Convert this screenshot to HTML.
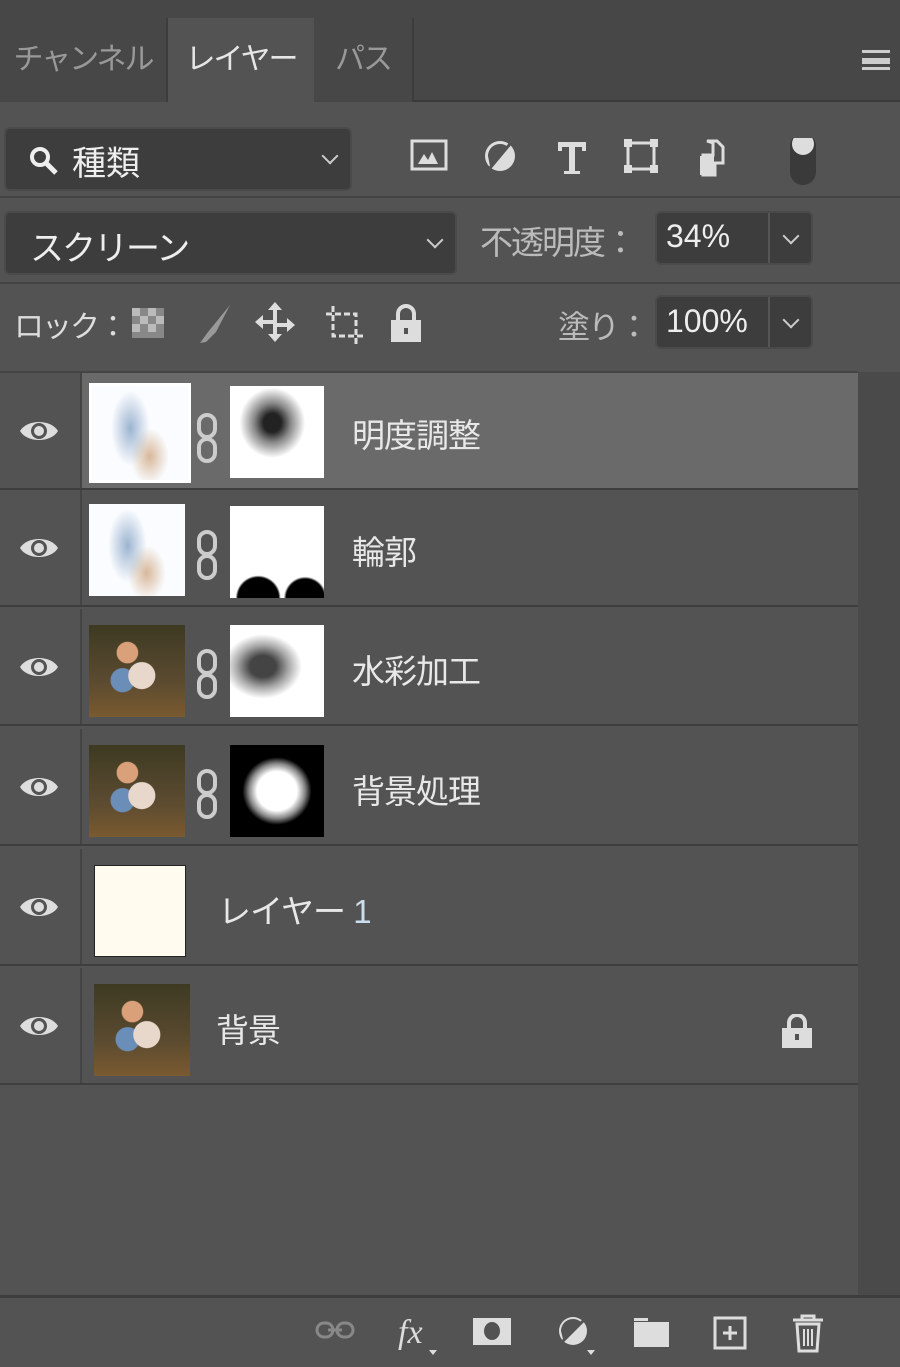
<!DOCTYPE html>
<html><head><meta charset="utf-8"><style>
*{margin:0;padding:0;box-sizing:border-box}
body{width:900px;height:1367px;background:#535353;position:relative;overflow:hidden;font-family:"Liberation Sans","Noto Sans CJK JP",sans-serif;color:#ddd}
.a{position:absolute}
.tab{position:absolute;top:18px;height:84px;font-size:30px;line-height:84px;text-align:center;color:#999;letter-spacing:-2px}
.box{position:absolute;background:#3d3d3d;border:2px solid #4a4a4a;border-radius:6px}
.row{position:absolute;left:0;width:858px;height:117px;border-bottom:2px solid #3e3e3e}
.row .eye{position:absolute;left:19px;top:50%;margin-top:-15px}
.row .sep{position:absolute;left:80px;top:0;bottom:0;width:2px;background:#444}
.name{position:absolute;font-size:33px;color:#e8e8e8;top:50%;margin-top:-22px;letter-spacing:-1px}
.th{position:absolute;top:16px;width:96px;height:92px}
.mk{position:absolute;top:16px;left:230px;width:94px;height:92px;background:#fff}
.chain{position:absolute;left:196px;top:40px}
.photo{background:radial-gradient(circle at 40% 30%,#d9a07a 0 12%,transparent 13%),radial-gradient(circle at 55% 55%,#e8d8cc 0 18%,transparent 19%),radial-gradient(circle at 35% 60%,#6a8eb8 0 14%,transparent 15%),linear-gradient(#3d3a22,#5a4a30 60%,#7a5a30)}
.sketch{background:radial-gradient(ellipse 20% 40% at 40% 45%,#9cb4d0 0,transparent 100%),radial-gradient(ellipse 20% 30% at 60% 75%,#d8b89a 0,transparent 100%),#fafcff}
.chev{position:absolute;width:12px;height:12px;border-right:2px solid #ccc;border-bottom:2px solid #ccc;transform:rotate(45deg)}
</style></head><body>
<div class="a" style="left:0;top:0;width:900px;height:18px;background:#474747"></div>
<div class="a" style="left:0;top:18px;width:900px;height:84px;background:#474747;border-bottom:2px solid #3a3a3a"></div>
<div class="tab" style="left:0;width:168px;background:#474747;border-right:2px solid #3c3c3c">チャンネル</div>
<div class="tab" style="left:168px;width:146px;background:#535353;color:#e6e6e6;height:86px">レイヤー</div>
<div class="tab" style="left:314px;width:100px;background:#474747;border-right:2px solid #3c3c3c">パス</div>
<div class="a" style="left:862px;top:50px;width:28px;height:20px;border-top:3px solid #ccc;border-bottom:3px solid #ccc"><div style="margin-top:5px;border-top:3px solid #ccc;height:3px;border-bottom:3px solid #ccc"></div></div>

<div class="box" style="left:4px;top:127px;width:348px;height:64px"></div>
<svg class="a" style="left:28px;top:145px" width="32" height="32"><circle cx="12" cy="12" r="8" fill="none" stroke="#eee" stroke-width="4"/><line x1="18" y1="18" x2="28" y2="28" stroke="#eee" stroke-width="5"/></svg>
<div class="a" style="left:72px;top:136px;font-size:34px;color:#eee">種類</div>
<div class="chev" style="left:324px;top:150px"></div>
<svg class="a" style="left:410px;top:138px" width="410" height="50" fill="#ddd">
<rect x="2" y="3" width="34" height="28" fill="none" stroke="#ddd" stroke-width="3"/><path d="M8 26l6-10 4 6 4-8 6 12z"/>
<circle cx="90" cy="18" r="15" fill="#ddd"/><path d="M80 30L100 6" stroke="#535353" stroke-width="3"/><path d="M78 18a12 12 0 0 1 20-9L80 28z" fill="#535353"/>
<path d="M148 4h28v9h-4v-4h-7v24h5v3h-16v-3h5V9h-7v4h-4z"/>
<rect x="218" y="5" width="26" height="26" fill="none" stroke="#ddd" stroke-width="3"/><rect x="214" y="1" width="8" height="8"/><rect x="240" y="1" width="8" height="8"/><rect x="214" y="27" width="8" height="8"/><rect x="240" y="27" width="8" height="8"/>
<path d="M297 3h10l6 6v16h-8v12h-12V17h10V5z" fill="none" stroke="#ddd" stroke-width="3"/><rect x="290" y="18" width="14" height="19"/>
<rect x="380" y="-5" width="26" height="52" rx="13" fill="#3a3a3a"/><circle cx="393" cy="6" r="11" fill="#ddd"/>
</svg>
<div class="a" style="left:0;top:196px;width:900px;height:2px;background:#444"></div>

<div class="box" style="left:4px;top:211px;width:453px;height:64px"></div>
<div class="a" style="left:30px;top:221px;font-size:34px;color:#eee;letter-spacing:-2px">スクリーン</div>
<div class="chev" style="left:429px;top:234px"></div>
<div class="a" style="left:480px;top:216px;font-size:33px;color:#bbb;letter-spacing:-2px">不透明度：</div>
<div class="box" style="left:655px;top:211px;width:158px;height:54px"></div>
<div class="a" style="left:768px;top:213px;width:2px;height:50px;background:#555"></div>
<div class="a" style="left:666px;top:218px;font-size:32px;color:#eee">34%</div>
<div class="chev" style="left:785px;top:230px"></div>
<div class="a" style="left:0;top:282px;width:900px;height:2px;background:#444"></div>

<div class="a" style="left:14px;top:302px;font-size:30px;color:#ddd;letter-spacing:-2px">ロック：</div>
<svg class="a" style="left:128px;top:300px" width="300" height="50">
<g fill="#888"><rect x="4" y="8" width="32" height="30"/></g><g fill="#bbb"><rect x="4" y="8" width="8" height="8"/><rect x="20" y="8" width="8" height="8"/><rect x="12" y="16" width="8" height="8"/><rect x="28" y="16" width="8" height="8"/><rect x="4" y="24" width="8" height="8"/><rect x="20" y="24" width="8" height="8"/></g>
<path d="M102 5L80 32l-8 11 6-1 10-10z" fill="#999"/>
<path d="M147 2l-7 8h5v10h-10v-5l-8 7 8 7v-5h10v10h-5l7 8 7-8h-5V27h10v5l8-7-8-7v5h-10V10h5z" fill="#ddd"/>
<path d="M205 6v30h30M198 14h30v30" fill="none" stroke="#ddd" stroke-width="3" stroke-dasharray="6 3"/>
<rect x="263" y="20" width="30" height="22" fill="#ddd"/><path d="M270 20v-6a8 8 0 0 1 16 0v6" fill="none" stroke="#ddd" stroke-width="4"/><rect x="276" y="28" width="4" height="6" fill="#535353"/>
</svg>
<div class="a" style="left:558px;top:302px;font-size:32px;color:#bbb;letter-spacing:-2px">塗り：</div>
<div class="box" style="left:655px;top:295px;width:158px;height:54px"></div>
<div class="a" style="left:768px;top:297px;width:2px;height:50px;background:#555"></div>
<div class="a" style="left:666px;top:303px;font-size:32px;color:#eee">100%</div>
<div class="chev" style="left:785px;top:314px"></div>

<div class="a" style="left:858px;top:372px;width:42px;height:923px;background:#4a4a4a"></div>
<div class="a" style="left:0;top:371px;width:858px;height:2px;background:#444"></div>

<svg width="0" height="0" style="position:absolute"><defs>
<g id="eye"><path d="M1 15C8 3 32 3 39 15C32 27 8 27 1 15z" fill="#ddd"/><circle cx="20" cy="15" r="8" fill="#535353"/><circle cx="20" cy="15" r="5" fill="#ddd"/></g>
<g id="ch"><rect x="3" y="2" width="16" height="22" rx="8" fill="none" stroke="#ccc" stroke-width="4"/><rect x="3" y="26" width="16" height="22" rx="8" fill="none" stroke="#ccc" stroke-width="4"/></g>
</defs></svg>

<div class="row" style="top:373px;background:#535353"><div class="a" style="left:82px;top:0;width:776px;height:115px;background:#6a6a6a"></div><div class="sep"></div><svg class="eye" width="40" height="30"><use href="#eye"/></svg>
<div class="th sketch" style="left:89px;top:10px;height:100px;width:102px;border:3px solid #fff"></div><svg class="chain" width="22" height="50"><use href="#ch"/></svg>
<div class="mk" style="top:13px;background:radial-gradient(ellipse at 45% 40%,#222 0 12%,#888 25%,#fff 45%)"></div>
<div class="name" style="left:352px">明度調整</div></div>

<div class="row" style="top:490px"><div class="sep"></div><svg class="eye" width="40" height="30"><use href="#eye"/></svg>
<div class="th sketch" style="left:89px;top:14px"></div><svg class="chain" width="22" height="50"><use href="#ch"/></svg>
<div class="mk" style="background:radial-gradient(circle at 30% 100%,#000 0 18%,transparent 20%),radial-gradient(circle at 80% 100%,#000 0 16%,transparent 18%),#fff"></div>
<div class="name" style="left:352px">輪郭</div></div>

<div class="row" style="top:609px"><div class="sep"></div><svg class="eye" width="40" height="30"><use href="#eye"/></svg>
<div class="th photo" style="left:89px"></div><svg class="chain" width="22" height="50"><use href="#ch"/></svg>
<div class="mk" style="background:radial-gradient(ellipse at 35% 45%,#444 0 15%,#aaa 30%,#fff 45%)"></div>
<div class="name" style="left:352px">水彩加工</div></div>

<div class="row" style="top:729px"><div class="sep"></div><svg class="eye" width="40" height="30"><use href="#eye"/></svg>
<div class="th photo" style="left:89px"></div><svg class="chain" width="22" height="50"><use href="#ch"/></svg>
<div class="mk" style="background:radial-gradient(ellipse at 50% 50%,#fff 0 30%,#888 42%,#000 52%)"></div>
<div class="name" style="left:352px">背景処理</div></div>

<div class="row" style="top:849px"><div class="sep"></div><svg class="eye" width="40" height="30"><use href="#eye"/></svg>
<div class="th" style="left:94px;width:92px;height:92px;background:#fffbee;border:1px solid #222"></div>
<div class="name" style="left:218px">レイヤー <span style="color:#cde">1</span></div></div>

<div class="row" style="top:968px"><div class="sep"></div><svg class="eye" width="40" height="30"><use href="#eye"/></svg>
<div class="th photo" style="left:94px"></div>
<div class="name" style="left:216px">背景</div>
<svg class="a" style="left:780px;top:46px" width="34" height="36"><rect x="2" y="14" width="30" height="20" fill="#ddd"/><path d="M9 14V9a8 8 0 0 1 16 0v5" fill="none" stroke="#ddd" stroke-width="4"/><rect x="15" y="20" width="4" height="6" fill="#535353"/></svg></div>

<div class="a" style="left:0;top:1295px;width:900px;height:3px;background:#3e3e3e"></div>
<svg class="a" style="left:300px;top:1305px" width="540" height="55">
<g fill="none" stroke="#888" stroke-width="3"><rect x="17" y="18" width="16" height="14" rx="7"/><rect x="37" y="18" width="16" height="14" rx="7"/><line x1="28" y1="25" x2="42" y2="25"/></g>
<text x="98" y="38" font-family="Liberation Serif" font-style="italic" font-size="34" fill="#ddd">fx</text><path d="M129 45h8l-4 5z" fill="#ddd"/>
<rect x="173" y="13" width="38" height="27" fill="#ddd"/><ellipse cx="192" cy="26" rx="8" ry="9" fill="#535353"/>
<circle cx="273" cy="26" r="14" fill="#ddd"/><path d="M262 37L285 14" stroke="#535353" stroke-width="3"/><path d="M261 26a12 12 0 0 1 20-9L263 34z" fill="#535353"/><path d="M287 45h8l-4 5z" fill="#ddd"/>
<rect x="334" y="17" width="35" height="25" fill="#ddd"/><rect x="334" y="13" width="14" height="3" fill="#ddd"/>
<rect x="415" y="13" width="30" height="30" fill="none" stroke="#ddd" stroke-width="3"/><path d="M430 21v14M423 28h14" stroke="#ddd" stroke-width="3"/>
<path d="M493 15h30M502 15v-4h12v4M497 19h22l-2 27h-18z" fill="none" stroke="#ddd" stroke-width="3"/><path d="M504 24v17M508 24v17M512 24v17" stroke="#ddd" stroke-width="2"/>
</svg>
</body></html>
